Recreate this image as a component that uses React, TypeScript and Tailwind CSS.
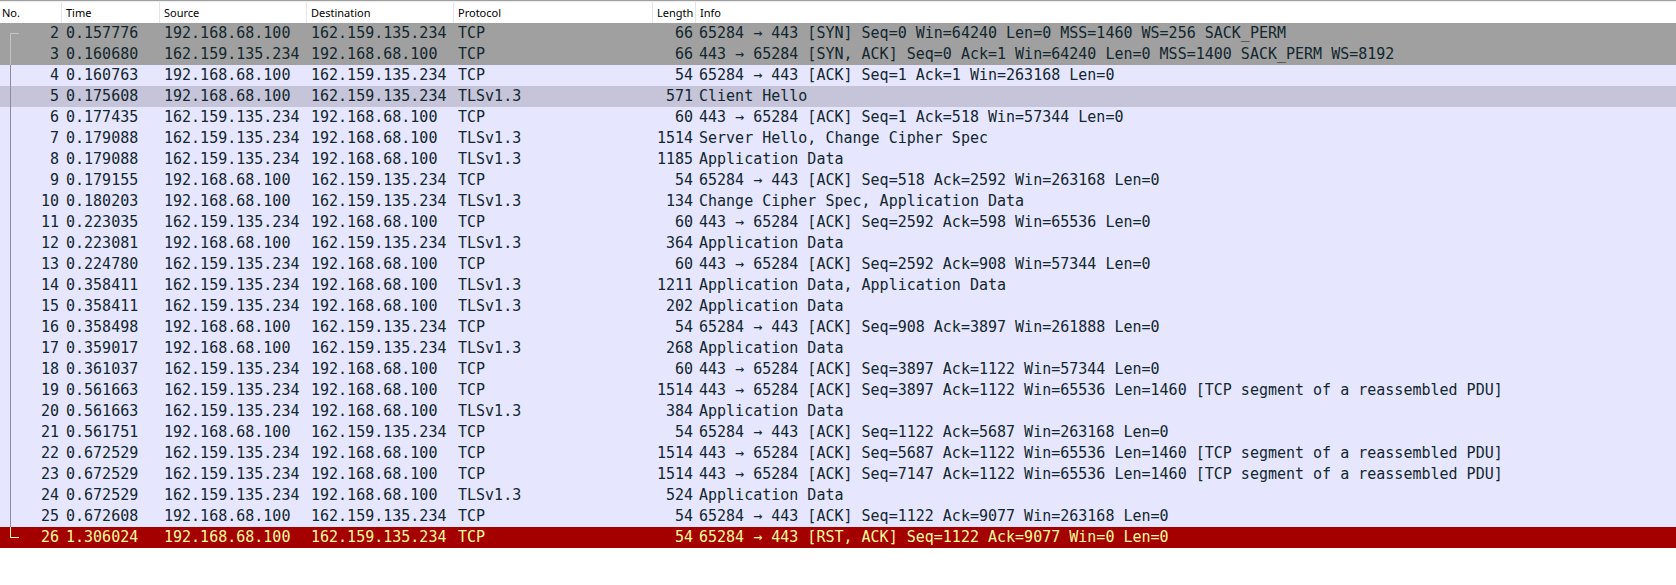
import React from "react";

type Kind = "syn" | "norm" | "sel" | "rst";
type Row = [number, string, string, string, string, number, string, Kind];

const A = "192.168.68.100";
const B = "162.159.135.234";

const rows: Row[] = [
  [2, "0.157776", A, B, "TCP", 66, "65284 → 443 [SYN] Seq=0 Win=64240 Len=0 MSS=1460 WS=256 SACK_PERM", "syn"],
  [3, "0.160680", B, A, "TCP", 66, "443 → 65284 [SYN, ACK] Seq=0 Ack=1 Win=64240 Len=0 MSS=1400 SACK_PERM WS=8192", "syn"],
  [4, "0.160763", A, B, "TCP", 54, "65284 → 443 [ACK] Seq=1 Ack=1 Win=263168 Len=0", "norm"],
  [5, "0.175608", A, B, "TLSv1.3", 571, "Client Hello", "sel"],
  [6, "0.177435", B, A, "TCP", 60, "443 → 65284 [ACK] Seq=1 Ack=518 Win=57344 Len=0", "norm"],
  [7, "0.179088", B, A, "TLSv1.3", 1514, "Server Hello, Change Cipher Spec", "norm"],
  [8, "0.179088", B, A, "TLSv1.3", 1185, "Application Data", "norm"],
  [9, "0.179155", A, B, "TCP", 54, "65284 → 443 [ACK] Seq=518 Ack=2592 Win=263168 Len=0", "norm"],
  [10, "0.180203", A, B, "TLSv1.3", 134, "Change Cipher Spec, Application Data", "norm"],
  [11, "0.223035", B, A, "TCP", 60, "443 → 65284 [ACK] Seq=2592 Ack=598 Win=65536 Len=0", "norm"],
  [12, "0.223081", A, B, "TLSv1.3", 364, "Application Data", "norm"],
  [13, "0.224780", B, A, "TCP", 60, "443 → 65284 [ACK] Seq=2592 Ack=908 Win=57344 Len=0", "norm"],
  [14, "0.358411", B, A, "TLSv1.3", 1211, "Application Data, Application Data", "norm"],
  [15, "0.358411", B, A, "TLSv1.3", 202, "Application Data", "norm"],
  [16, "0.358498", A, B, "TCP", 54, "65284 → 443 [ACK] Seq=908 Ack=3897 Win=261888 Len=0", "norm"],
  [17, "0.359017", A, B, "TLSv1.3", 268, "Application Data", "norm"],
  [18, "0.361037", B, A, "TCP", 60, "443 → 65284 [ACK] Seq=3897 Ack=1122 Win=57344 Len=0", "norm"],
  [19, "0.561663", B, A, "TCP", 1514, "443 → 65284 [ACK] Seq=3897 Ack=1122 Win=65536 Len=1460 [TCP segment of a reassembled PDU]", "norm"],
  [20, "0.561663", B, A, "TLSv1.3", 384, "Application Data", "norm"],
  [21, "0.561751", A, B, "TCP", 54, "65284 → 443 [ACK] Seq=1122 Ack=5687 Win=263168 Len=0", "norm"],
  [22, "0.672529", B, A, "TCP", 1514, "443 → 65284 [ACK] Seq=5687 Ack=1122 Win=65536 Len=1460 [TCP segment of a reassembled PDU]", "norm"],
  [23, "0.672529", B, A, "TCP", 1514, "443 → 65284 [ACK] Seq=7147 Ack=1122 Win=65536 Len=1460 [TCP segment of a reassembled PDU]", "norm"],
  [24, "0.672529", B, A, "TLSv1.3", 524, "Application Data", "norm"],
  [25, "0.672608", A, B, "TCP", 54, "65284 → 443 [ACK] Seq=1122 Ack=9077 Win=263168 Len=0", "norm"],
  [26, "1.306024", A, B, "TCP", 54, "65284 → 443 [RST, ACK] Seq=1122 Ack=9077 Win=0 Len=0", "rst"],
];

const rowCls: Record<Kind, string> = {
  syn: "bg-[#a0a0a0] text-[#12272e]",
  norm: "bg-[#e6e6ff] text-[#12272e]",
  sel: "bg-[#c5c4d9] text-[#12272e]",
  rst: "bg-[#a40000] text-[#fffc9c]",
};

const lineColor: Record<Kind, string> = {
  syn: "#c4c4c4",
  norm: "#8c8c9c",
  sel: "#8c8c9c",
  rst: "#fffc9c",
};

const GRID = "grid grid-cols-[62px_98px_147px_147px_199px_43px_1fr]";

function Bracket({ pos, kind }: { pos: "first" | "mid" | "last"; kind: Kind }) {
  const c = lineColor[kind];
  return (
    <svg width="20" height="21" className="shrink-0 block">
      {pos === "first" && (
        <>
          <line x1="10.5" y1="10.5" x2="10.5" y2="21" stroke={c} strokeWidth="1" />
          <line x1="10" y1="10.5" x2="19" y2="10.5" stroke={c} strokeWidth="1" />
        </>
      )}
      {pos === "mid" && <line x1="10.5" y1="0" x2="10.5" y2="21" stroke={c} strokeWidth="1" />}
      {pos === "last" && (
        <>
          <line x1="10.5" y1="0" x2="10.5" y2="10.5" stroke={c} strokeWidth="1" />
          <line x1="10" y1="10.5" x2="19" y2="10.5" stroke={c} strokeWidth="1" />
        </>
      )}
    </svg>
  );
}

export default function App() {
  const headers = ["No.", "Time", "Source", "Destination", "Protocol", "Length", "Info"];
  return (
    <div className="w-[1676px] h-[585px] bg-white overflow-hidden">
      <div className="h-px bg-[#a0a0a0]" />
      <div className="h-px bg-[#ececec]" />
      <div className={`${GRID} h-[21px] bg-white text-black font-['Noto_Sans',sans-serif] text-[11px] leading-[21px]`}>
        {headers.map((h, i) => (
          <div
            key={h}
            className={`h-[21px] whitespace-pre ${i === 0 ? "pl-[2px]" : "pl-[4px]"} ${
              i < 6 ? "border-r border-[#e5e5e5]" : ""
            }`}
          >
            {h}
          </div>
        ))}
      </div>
      <div className="font-['DejaVu_Sans_Mono',monospace] text-[15px] leading-[21px]">
        {rows.map((r, idx) => {
          const [no, time, src, dst, proto, len, info, kind] = r;
          const pos = idx === 0 ? "first" : idx === rows.length - 1 ? "last" : "mid";
          return (
            <div key={no} className={`${GRID} h-[21px] whitespace-pre ${rowCls[kind]}`}>
              <div className="flex h-[21px]">
                <Bracket pos={pos} kind={kind} />
                <div className="flex-1 text-right pr-[3px]">{no}</div>
              </div>
              <div className="pl-[4px] overflow-hidden">{time}</div>
              <div className="pl-[4px] overflow-hidden">{src}</div>
              <div className="pl-[4px] overflow-hidden">{dst}</div>
              <div className="pl-[4px] overflow-hidden">{proto}</div>
              <div className="text-right pr-[3px]">{len}</div>
              <div className="pl-[3px] overflow-hidden">{info}</div>
            </div>
          );
        })}
      </div>
    </div>
  );
}
